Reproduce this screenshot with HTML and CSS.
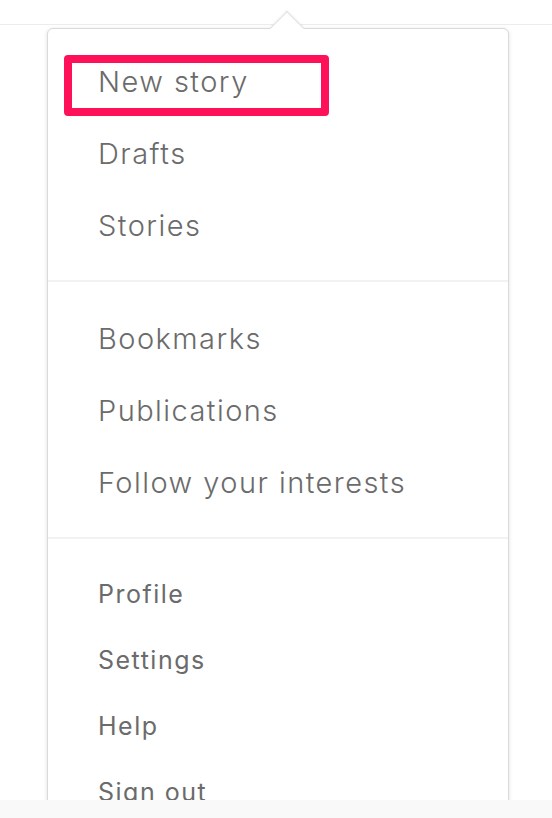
FILE: index.html
```html
<!DOCTYPE html>
<html>
<head>
<meta charset="utf-8">
<link rel="stylesheet" href="styles.css">
</head>
<body>
<div class="topbar"></div>
<div class="menu">
  <div class="caret"></div>
  <div class="group group-1">
    <div class="item big">New story</div>
    <div class="item big">Drafts</div>
    <div class="item big">Stories</div>
  </div>
  <div class="group group-2">
    <div class="item big">Bookmarks</div>
    <div class="item big">Publications</div>
    <div class="item big">Follow your interests</div>
  </div>
  <div class="group group-3">
    <div class="item small">Profile</div>
    <div class="item small">Settings</div>
    <div class="item small">Help</div>
    <div class="item small">Sign out</div>
  </div>
  <div class="highlight"></div>
</div>
<div class="bottombar"></div>
</body>
</html>
```
FILE: styles.css
```css
html, body {
  margin: 0;
  padding: 0;
  background: #fff;
  width: 552px;
  height: 818px;
  overflow: hidden;
  font-family: Inter, "Liberation Sans", sans-serif;
  color: #6b6b6b;
}
.topbar {
  height: 24px;
  border-bottom: 1px solid #ececec;
}
.menu {
  position: relative;
  margin: 3px 0 0 47px;
  width: 460px;
  background: #fff;
  border: 1px solid #dadada;
  border-radius: 6px;
  box-shadow: 0 1px 4px rgba(0,0,0,0.12);
  height: 800px;
}
.caret {
  position: absolute;
  top: -13px;
  left: 227px;
  width: 23px;
  height: 23px;
  background: #fff;
  border-left: 1px solid #e0e0e0;
  border-top: 1px solid #e0e0e0;
  transform: rotate(45deg);
  box-shadow: -1px -1px 2px rgba(0,0,0,0.05);
}
.group {
  padding-left: 50px;
}
.group-1 {
  padding-top: 17px;
  padding-bottom: 18px;
  border-bottom: 2px solid #f2f2f2;
}
.group-2 {
  padding-top: 21px;
  padding-bottom: 18px;
  border-bottom: 2px solid #f2f2f2;
}
.group-3 {
  padding-top: 22px;
}
.item {
  white-space: nowrap;
}
.item.big {
  height: 72px;
  line-height: 72px;
  font-size: 29px;
  font-weight: 300;
  letter-spacing: 1.45px;
}
.item.small {
  height: 66px;
  line-height: 66px;
  font-size: 25px;
  font-weight: 400;
  letter-spacing: 1.5px;
}
.highlight {
  position: absolute;
  left: 16px;
  top: 26px;
  width: 249px;
  height: 45px;
  border: 8px solid #fe1158;
  border-radius: 4px;
}
.bottombar {
  position: absolute;
  left: 0;
  top: 800px;
  width: 552px;
  height: 18px;
  background: #f9f9f9;
}
```
